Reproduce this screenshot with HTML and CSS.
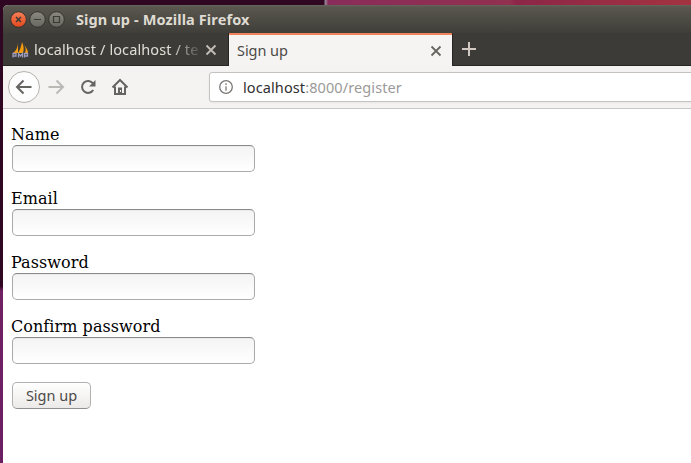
FILE: index.html
```html
<!DOCTYPE html>
<html lang="en">
<head>
<meta charset="utf-8">
<title>Sign up</title>
<link rel="stylesheet" href="styles.css">
</head>
<body>
<div class="window">
  <header class="titlebar">
    <svg class="controls" width="60" height="18" viewBox="0 0 60 18" fill="none">
      <defs>
        <linearGradient id="close" x1="0" y1="0" x2="0" y2="1"><stop stop-color="#f58059"/><stop offset="1" stop-color="#e5481b"/></linearGradient>
        <linearGradient id="grey" x1="0" y1="0" x2="0" y2="1"><stop stop-color="#8b897f"/><stop offset="1" stop-color="#676660"/></linearGradient>
      </defs>
      <g stroke="#34332e">
        <circle cx="9.5" cy="9.5" r="7.8" fill="url(#close)"/>
        <circle cx="28.5" cy="9.5" r="7.8" fill="url(#grey)"/>
        <circle cx="47.5" cy="9.5" r="7.8" fill="url(#grey)"/>
      </g>
      <g stroke="#3b3a35" stroke-width="1.2"><path d="M7 7l5 5M12 7l-5 5" stroke-width="1.5"/><path d="M25 9.5h7M44.5 6.5h6v6h-6z"/></g>
    </svg>
    <span class="title">Sign up - Mozilla Firefox</span>
  </header>
  <nav class="tabs">
    <div class="tab">
      <svg class="favicon" width="17" height="16" viewBox="0 0 17 16">
        <path fill="#f89c0e" d="M6 1C6 5 4 9 1 11h5zM10 0c-1 5-2 8-4 11h5c1-3 1-7-1-11zM12 3c2 3 2 5 1 8h3c0-3-2-6-4-8z"/>
        <path fill="none" stroke="#9a9bbd" stroke-width="1.3" d="M1 15.500v-4h3v2.500H1M6.500 15.500v-4l2 2.500 2-2.500v4M12.500 15.500v-4h3v2.500h-3"/>
      </svg>
      <span class="tab-label faded">localhost / localhost / te</span>
      <svg class="close" width="12" height="12" viewBox="0 0 12 12"><path d="M1.500 1.500l9 9M10.500 1.500l-9 9"/></svg>
    </div>
    <div class="tab active">
      <span class="tab-label">Sign up</span>
      <svg class="close" width="12" height="12" viewBox="0 0 12 12"><path d="M1.500 1.500l9 9M10.500 1.500l-9 9"/></svg>
    </div>
    <svg class="plus" width="14" height="14" viewBox="0 0 14 14"><path d="M7 0v14M0 7h14"/></svg>
  </nav>
  <div class="toolbar">
    <div class="back"><svg width="18" height="16" viewBox="0 0 18 16"><path d="M8.500 1.500L2 8l6.500 6.500M2 8h14.500"/></svg></div>
    <svg class="forward" width="18" height="16" viewBox="0 0 18 16"><path d="M9.500 1.500L16 8l-6.500 6.500M16 8H1.500"/></svg>
    <svg class="reload" width="16" height="16" viewBox="0 0 16 16"><path d="M13 4.500A6 6 0 1 0 13.200 11"/><path class="solid" d="M15.500 1v6.500H9z"/></svg>
    <svg class="home" width="18" height="18" viewBox="0 0 18 18"><path d="M1.500 9.500L9 2l7.500 7.500M4 8.500V16h10V8.500"/><path class="solid" d="M7 9.500h4V16H7z"/><path class="knob" d="M9 12h1v2H9z"/></svg>
    <div class="urlbar">
      <svg width="14" height="14" viewBox="0 0 14 14"><circle cx="7" cy="7" r="6.300"/><path d="M7 6.200v4.500M7 3.300v1.600"/></svg>
      <span class="url">localhost<span class="path">:8000/register</span></span>
    </div>
  </div>
  <main>
    <form>
      <label>Name<input type="text"></label>
      <label>Email<input type="text"></label>
      <label>Password<input type="password"></label>
      <label>Confirm password<input type="password"></label>
      <button type="button"><span>Sign up</span></button>
    </form>
  </main>
</div>
</body>
</html>
```
FILE: styles.css
```css
* { box-sizing: border-box; }
html { height: 100%; }
body {
  margin: 0;
  height: 463px;
  padding: 5px 0 0 3px;
  overflow: hidden;
  background:
    linear-gradient(90deg, #300722 324px, #927d91 325px, #927d91 326px, #8a2c5b 328px, #91304f 510px, #8c2648 516px, #a33340) 0 0 / 100% 6px no-repeat,
    linear-gradient(#300722 286px, #722064 291px, #6c1e62);
  font-family: "Noto Sans", sans-serif;
}
svg { display: block; flex: none; }
.window { height: 458px; border-radius: 5px 0 0 0; overflow: hidden; background: #fff; }
.titlebar {
  height: 28px;
  display: flex;
  align-items: center;
  padding-left: 6px;
  background: linear-gradient(#68665c 0, #59574e 2px, #3f3e39);
}
.title {
  margin-left: 7px;
  color: #dfdbd2;
  font: bold 14.500px/20px "Noto Sans", sans-serif;
  letter-spacing: 0.12px;
  white-space: nowrap;
}
.tabs { height: 33px; display: flex; background: #3c3b37; box-shadow: inset 0 -1px #252522; }
.tab { width: 225px; display: flex; align-items: center; padding: 1px 11px 0 9px; color: #e1ddd5; }
.tab.active {
  width: 223px;
  margin-left: 1px;
  padding: 0 10px 0 8px;
  background: #f5f4f2;
  border-top: 2px solid #f0825c;
  color: #4b4a48;
  box-shadow: -1px 0 #252522, 1px 0 #252522;
}
.tab-label { flex: 1; margin-top: -2px; font-size: 14.500px; line-height: 20px; white-space: nowrap; letter-spacing: -0.05px; }
.faded {
  margin-left: 5px;
  letter-spacing: 0.1px;
  -webkit-mask-image: linear-gradient(90deg, #000 136px, transparent 170px);
  mask-image: linear-gradient(90deg, #000 136px, transparent 170px);
}
.close { fill: none; stroke: #c4beb7; stroke-width: 1.8; }
.active .close { stroke: #666560; }
.plus { margin: 9px 0 0 10px; stroke: #d0c8c1; stroke-width: 2; }
.toolbar {
  height: 43px;
  display: flex;
  align-items: center;
  padding-left: 5px;
  background: #f4f3f1;
  border-bottom: 1px solid #c9c6c3;
}
.toolbar svg { fill: none; stroke: #656461; stroke-width: 2; }
.back {
  width: 32px;
  height: 32px;
  flex: none;
  display: grid;
  place-items: center;
  border: 1px solid #b6b3af;
  border-radius: 50%;
  background: #fdfdfd;
}
.toolbar .forward { margin-left: 7px; stroke: #bbb9b6; }
.reload { margin-left: 15px; }
.home { margin-left: 15px; }
.toolbar .solid { fill: #656461; stroke: none; }
.toolbar .knob { fill: #f4f3f1; stroke: none; }
.urlbar {
  width: 500px;
  height: 30px;
  flex: none;
  display: flex;
  align-items: center;
  margin-left: 80px;
  padding-left: 9px;
  border: 1px solid #c5c2bf;
  border-radius: 3px;
  background: #fff;
  box-shadow: 0 1px 3px #0000000d;
}
.toolbar .urlbar svg { stroke: #797775; stroke-width: 1.3; }
.url { margin-left: 10px; font-size: 14.500px; line-height: 20px; color: #30302f; letter-spacing: 0.1px; white-space: nowrap; }
.path { color: #9b9a98; }
main { padding: 16px 8px; font: 16px/19px "DejaVu Serif", serif; color: #000; }
label { display: block; height: 64px; letter-spacing: 0.06px; }
input {
  display: block;
  width: 243px;
  height: 27px;
  margin: 1px 0 0 1px;
  border: 1px solid #aaa;
  border-top-color: #898989;
  border-radius: 5px;
  background: linear-gradient(#f4f4f4, #fff);
  box-shadow: inset 0 1px 1px #0000000c;
}
button {
  display: block;
  width: 79px;
  height: 27px;
  margin: 1px 0 0 1px;
  padding: 0 0 1px;
  border: 1px solid #b3b1af;
  border-bottom-color: #92908e;
  border-radius: 5px;
  background: linear-gradient(#fff, #eceae8);
  color: #4c4b49;
  font: 14.500px/22px "Noto Sans", sans-serif;
  letter-spacing: 0;
}
```
